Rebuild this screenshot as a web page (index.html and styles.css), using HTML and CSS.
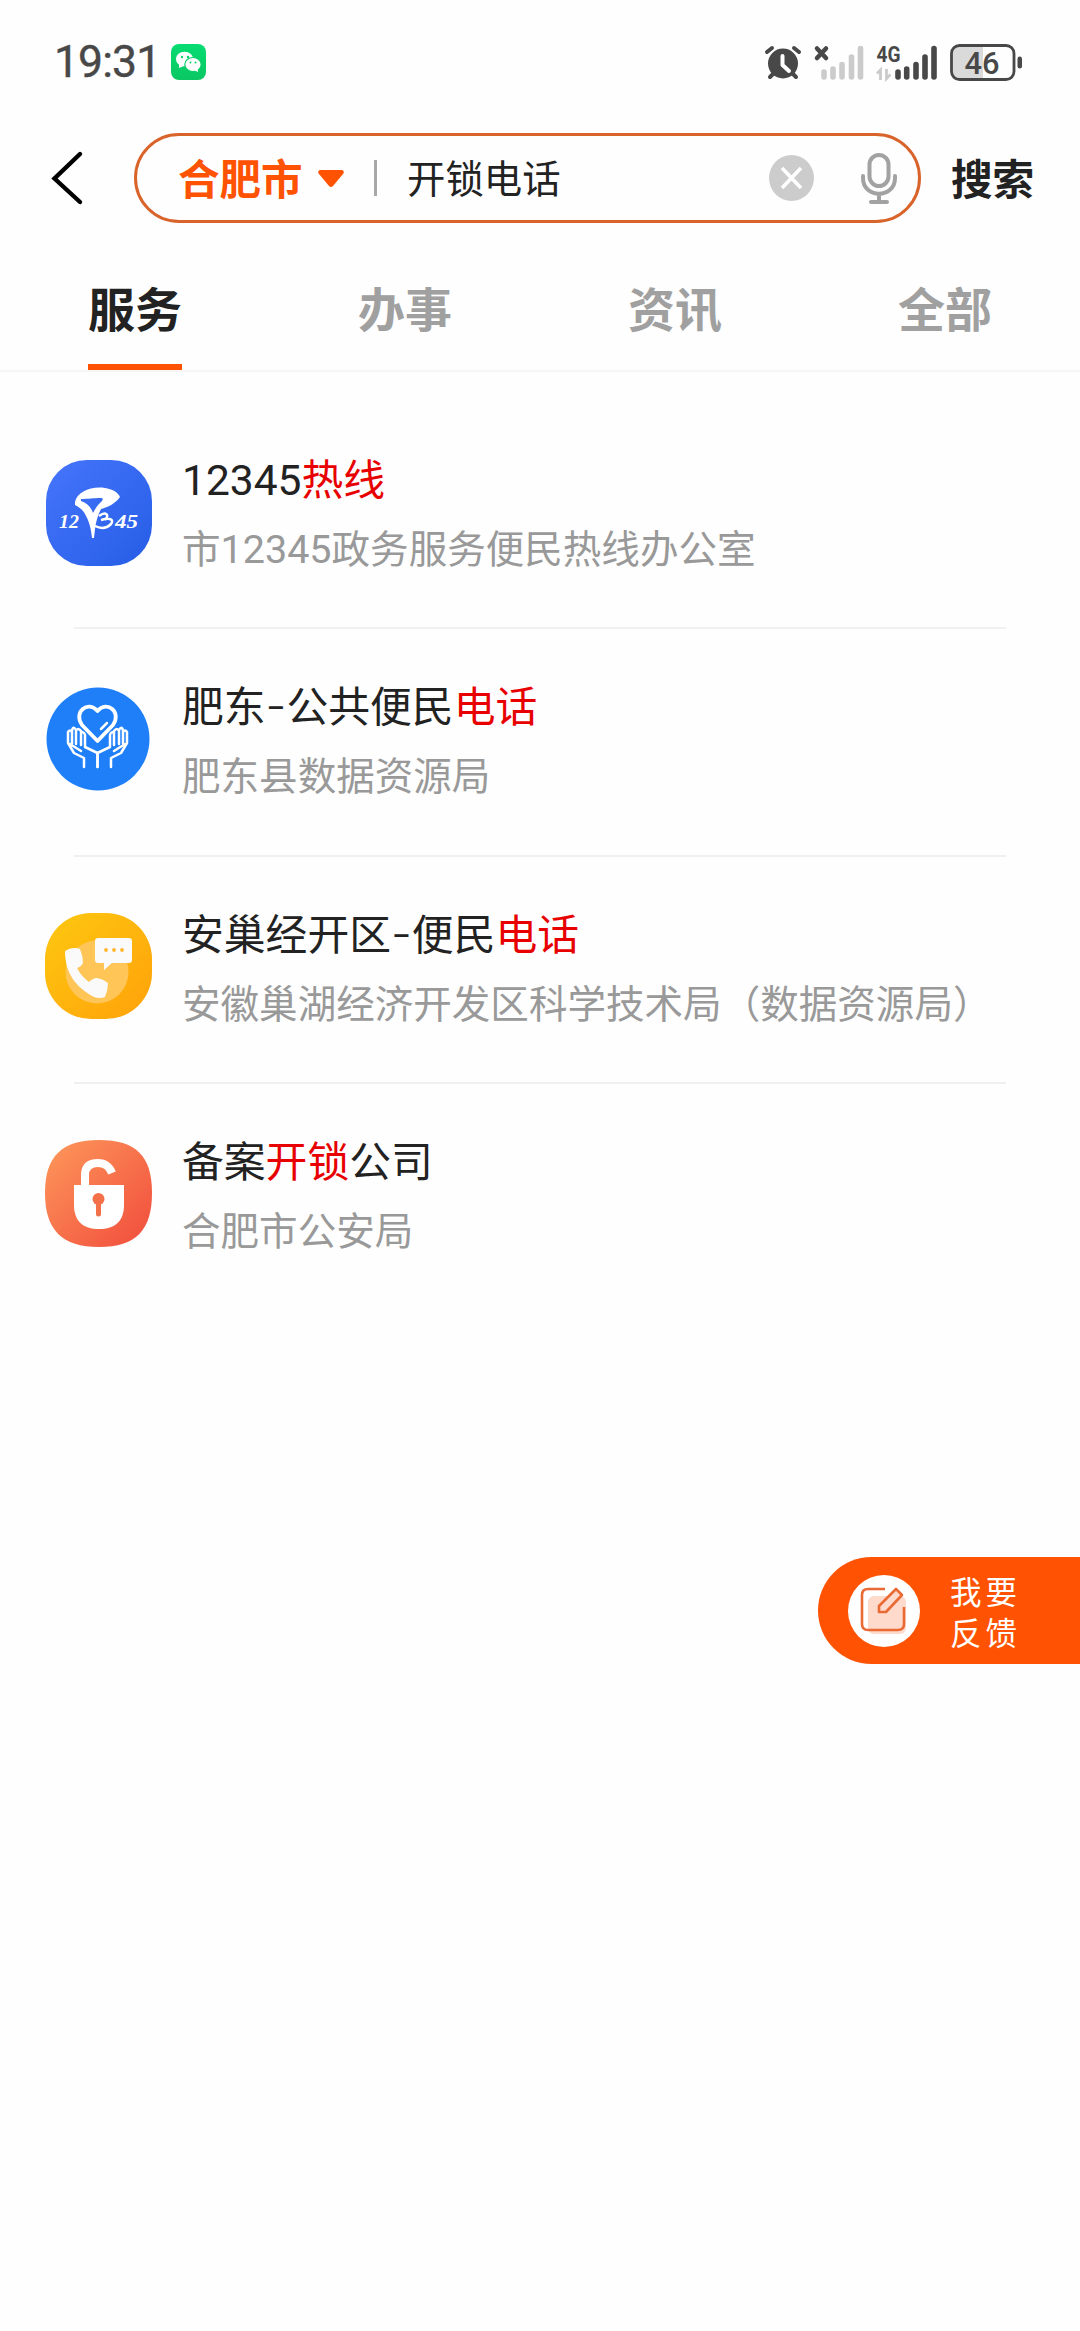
FILE: index.html
```
<!DOCTYPE html>
<html lang="zh-CN">
<head>
<meta charset="utf-8">
<title>搜索</title>
<link rel="stylesheet" href="styles.css">
</head>
<body>
<header class="status">
  <span class="time">19:31</span>
  <svg class="wechat" width="35" height="36" viewBox="0 0 35 36"><defs><linearGradient id="wg" x1="0" y1="0" x2="0" y2="1"><stop offset="0" stop-color="#06dc72"/><stop offset="1" stop-color="#0ac762"/></linearGradient></defs><rect width="35" height="36" rx="8" fill="url(#wg)"/><ellipse cx="13.5" cy="15" rx="8.6" ry="7.3" fill="#fff"/><path d="M8 20v4l5-2z" fill="#fff"/><ellipse cx="22" cy="20.5" rx="8.2" ry="7" fill="#fff" stroke="#08d06a" stroke-width="1.2"/><path d="M23 26l4 2-.3-4z" fill="#fff"/><g fill="#0ad06a"><circle cx="11" cy="13" r="1.2"/><circle cx="17" cy="13" r="1.2"/><circle cx="19.5" cy="18.5" r="1"/><circle cx="24.500" cy="18.500" r="1"/></g></svg>
  <svg class="signals" width="262" height="40" viewBox="762 42 262 40" fill="#484848">
    <circle cx="783" cy="63.500" r="15"/><g stroke="#484848" stroke-width="4" stroke-linecap="round"><path d="M767 52l5-4M799 52l-5-4M774 73l-4 4M792 73l4 4"/></g><path d="M782.500 56v9l6.500 6" fill="none" stroke="#fff" stroke-width="4" stroke-linecap="round" stroke-linejoin="round"/>
    <path d="M817 48.500l9 9.500M826 48.500L817 58" stroke="#484848" stroke-width="4.500" stroke-linecap="round"/>
    <g stroke="#cbcbcb" stroke-width="5.600" stroke-linecap="round"><path d="M824 72v5M833 69v8M842 64.500v12.500M851.500 57v20M860.500 48.500V77"/></g>
    <text x="876.500" y="62" class="net" textLength="24" lengthAdjust="spacingAndGlyphs">4G</text>
    <path d="M877 73.500l3.500-3.500v10M886.500 69v9.500l4-4" fill="none" stroke="#cbcbcb" stroke-width="2.800"/>
    <g stroke="#484848" stroke-width="5.600" stroke-linecap="round"><path d="M898 72v5M906.700 69v8M916 64.500v12.500M925 57v20M934 48.500V77"/></g>
    <path d="M959 45h24v34h-24q-7 0-7-7V52q0-7 7-7z" fill="#dadada"/><rect x="951.500" y="45.500" width="62.500" height="34" rx="8" fill="none" stroke="#484848" stroke-width="2.800"/>
    <rect x="1017.500" y="56.500" width="4.500" height="12" rx="2.200"/>
    <text x="964.500" y="74" class="bat" textLength="35" lengthAdjust="spacingAndGlyphs">46</text>
  </svg>
</header>
<div class="search">
  <svg class="back" width="40" height="60" viewBox="0 0 40 60"><path d="M34 6L8.500 30.500 34 54" fill="none" stroke="#000" stroke-width="4.400" stroke-linecap="round"/></svg>
  <div class="pill">
    <b class="city">合肥市</b>
    <svg class="caret" width="26" height="18" viewBox="0 0 26 18"><path d="M2 0h22q3 1 1 4L15 16q-2 2-4 0L1 4Q-1 1 2 0z" fill="#ff5303"/></svg>
    <i class="bar"></i>
    <span class="query">开锁电话</span>
    <svg width="45" height="46" viewBox="0 0 45 46"><ellipse cx="22.500" cy="23" rx="22.500" ry="23" fill="#ccc"/><path d="M13 13l19 20M32 13L13 33" stroke="#fff" stroke-width="3.600"/></svg>
    <svg class="mic" width="38" height="52" viewBox="0 0 38 52" fill="none" stroke="#a2a2a2" stroke-width="4"><rect x="9.500" y="3" width="19" height="31" rx="9.500"/><path d="M3 24v2c0 21 32 21 32 0v-2M19 42v8M11 50h16" stroke-linecap="round"/></svg>
  </div>
  <b class="go">搜索</b>
</div>
<nav class="tabs"><span class="tab on">服务</span><span class="tab">办事</span><span class="tab">资讯</span><span class="tab">全部</span></nav>
<main class="list">
  <section class="item">
    <svg class="icon" width="108" height="108" viewBox="0 0 108 108"><defs><linearGradient id="a" x1="0" y1="0" x2="1" y2="1"><stop offset="0" stop-color="#4575fb"/><stop offset="1" stop-color="#265de6"/></linearGradient></defs><rect x="1" y="1" width="106" height="106" rx="41" fill="url(#a)"/><path d="M30 43C32 33 46 27 60 29c7 1 13 4 15 9-5 7-12 10-19 12-3 6-5 12-6 20l-1 9h-2c-1-10-3-17-7-24-2-4-6-7-10-9zM36 40c6 0 14-1 19-1 4 0 3 2 1 4-4 4-6 7-8 11-2-6-6-10-12-12z" fill="#fff" fill-rule="evenodd"/><path d="M54 57c7-5 11-1 6 4M56 61c10-3 13 0 10 4-4 4-10 5-16 2" fill="none" stroke="#fff" stroke-width="2.500"/><text x="14" y="69" class="logo" textLength="20" lengthAdjust="spacingAndGlyphs">12</text><text x="70" y="69" class="logo" textLength="23" lengthAdjust="spacingAndGlyphs">45</text></svg>
    <div class="copy"><h2><span class="num">12345</span><em>热线</em></h2><p>市<span class="num">12345</span>政务服务便民热线办公室</p></div>
  </section>
  <section class="item">
    <svg class="icon" width="108" height="108" viewBox="0 0 108 108"><circle cx="53" cy="53" r="51.500" fill="#1e7ff8"/><g fill="none" stroke="#fff" stroke-width="2.500" stroke-linejoin="round" stroke-linecap="round"><path d="M52.500 55L37 39c-9-13 6-25 15.500-14C62 14 77 26 68 39z" stroke-width="3.800"/><path d="M56 43l6-6"/><g id="hand"><path d="M39 81v-9l-10-5-6-10V46q2-3 4 0v12M27 45q1-6 4-1v14M31 45q2-4 5 0v14M36 47q3-2 4 2v12l12.500 6M25 58l11 7M52.500 67v14"/></g><use href="#hand" transform="matrix(-1 0 0 1 105 0)"/></g></svg>
    <div class="copy"><h2>肥东<span class="dash">-</span>公共便民<em>电话</em></h2><p>肥东县数据资源局</p></div>
  </section>
  <section class="item">
    <svg class="icon" width="108" height="108" viewBox="0 0 108 108"><defs><linearGradient id="y" x1="0" y1="0" x2="1" y2="1"><stop offset="0" stop-color="#fdc810"/><stop offset="1" stop-color="#ffa10a"/></linearGradient></defs><rect x="0" y="0" width="107" height="106" rx="46" fill="url(#y)"/><circle cx="52" cy="59" r="31.500" fill="#ffc557"/><path d="M20 38q7-5 15-2 3 7 3 14-2 4-6 5 4 8 12 14 4-4 8-4 6 1 11 5 0 7-3 14-5 2-11 0C30 74 20 59 20 38z" fill="#fafafa"/><path d="M53 25h31q3 0 3 3v19q0 3-3 3H67l-8 7v-7h-6q-3 0-3-3V28q0-3 3-3z" fill="#fafafa"/><g fill="#ffb52d"><circle cx="61" cy="37" r="1.900"/><circle cx="69" cy="37" r="1.900"/><circle cx="77" cy="37" r="1.900"/></g></svg>
    <div class="copy"><h2>安巢经开区<span class="dash">-</span>便民<em>电话</em></h2><p>安徽巢湖经济开发区科学技术局（数据资源局）</p></div>
  </section>
  <section class="item">
    <svg class="icon" width="108" height="108" viewBox="0 0 108 108"><defs><linearGradient id="r" x1="0" y1="0" x2="1" y2="1"><stop offset=".1" stop-color="#fc9158"/><stop offset=".9" stop-color="#f2533f"/></linearGradient></defs><path d="M54 0C91 0 107 16 107 53S91 107 54 107 0 90 0 53 17 0 54 0z" fill="url(#r)"/><path d="M29 45h50v20c0 16-9 24-25 24S29 81 29 65z" fill="#fff"/><path d="M40 48V35q0-12 13-12 10 0 14 10" fill="none" stroke="#fff" stroke-width="8"/><circle cx="53.500" cy="59" r="6" fill="#f47049"/><path d="M53.500 61v13" stroke="#f47049" stroke-width="5" stroke-linecap="round"/></svg>
    <div class="copy"><h2>备案<em>开锁</em>公司</h2><p>合肥市公安局</p></div>
  </section>
</main>
<aside class="feedback">
  <svg width="72" height="72" viewBox="0 0 72 72"><circle cx="36" cy="36" r="36" fill="#fff"/><rect x="20" y="21" width="38" height="38" rx="6" fill="#fddacb"/><path d="M37 14H20q-6 0-6 6v29q0 6 6 6h30q6 0 6-6V32" fill="none" stroke="#ea6a35" stroke-width="2.600"/><path d="M31 31l17-17 6 6-16 17h-7z" fill="#fddacb" stroke="#ea6a35" stroke-width="2.600" stroke-linejoin="round"/></svg>
  <span>我要<br>反馈</span>
</aside>
</body>
</html>
```
FILE: styles.css
```
body { margin: 0; height: 2331px; position: relative; background: #fefefe; color: #222; font-family: "Noto Sans CJK SC", sans-serif; overflow: hidden; }
svg { display: block; flex: none; }
.status { height: 124px; display: flex; align-items: center; padding: 0 56px 0 54px; box-sizing: border-box; color: #484848; }
.time { width: 117px; padding-top: 1px; font: 400 44.5px/1 Roboto, sans-serif; letter-spacing: -0.9px; -webkit-text-stroke: 0.4px #484848; }
.signals { margin-left: auto; }
.net { font: 700 22px Roboto, sans-serif; }
.bat { font: 500 32px Roboto, sans-serif; }
.search { height: 108px; display: flex; align-items: center; padding: 0 0 0 46px; }
.pill { width: 787px; height: 90px; margin-left: 48px; box-sizing: border-box; border: 3px solid #d9642b; border-radius: 45px; display: flex; align-items: center; padding: 0 20px 0 41px; }
.city, .query, .go { padding-bottom: 3px; white-space: nowrap; }
.query { padding-bottom: 4px; }
.city { width: 124px; font-size: 41.5px; line-height: 60px; color: #ff5303; }
.caret { margin: 1px 0 0 16px; }
.bar { width: 3px; height: 36px; margin-left: 30px; background: #a8a8a8; }
.query { flex: 1; margin-left: 30px; font-size: 38.4px; line-height: 60px; }
.mic { margin-left: 46px; }
.go { margin-left: 30px; font-size: 41.6px; line-height: 60px; }
.tabs { height: 140px; box-sizing: border-box; border-bottom: 2px solid #f6f6f6; display: grid; grid-template-columns: repeat(4, 270px); justify-items: center; }
.tab { height: 138px; box-sizing: border-box; line-height: 149px; font-size: 47px; font-weight: 700; color: #a0a0a0; }
.on { color: #222; border-bottom: 6px solid #ff5303; }
.list { padding-top: 29px; }
.item { height: 227.5px; box-sizing: border-box; display: flex; padding: 57px 0 0 45px; background: linear-gradient(#f0f0f0, #f0f0f0) 74px 100% / 932px 2px no-repeat; }
.item:first-child { height: 228px; padding-top: 58px; }
.item:last-child { background: none; }
.item:nth-child(n+3) .icon { margin-top: -1px; }
.copy { margin: -3px 0 0 29px; white-space: nowrap; }
h2, p { margin: 0; font-weight: 400; }
h2 { font-size: 41.8px; line-height: 42px; }
p { margin-top: 27px; font-size: 38.55px; line-height: 42px; color: #999; }
em { color: #e80000; font-style: normal; }
.num { font-family: Roboto, sans-serif; font-size: 42.5px; line-height: 0; }
p .num { font-size: 39.5px; }
.dash { font-family: Inter, sans-serif; font-size: 46px; font-weight: 300; line-height: 0; }
.logo { font: italic 700 19px "Liberation Serif", serif; fill: #fff; }
.feedback { position: absolute; right: 0; top: 1557px; width: 262px; height: 107px; box-sizing: border-box; padding-left: 30px; border-radius: 54px 0 0 54px; background: #ff5303; color: #fff; display: flex; align-items: center; gap: 30px; font-size: 31.5px; line-height: 41px; letter-spacing: 4px; }
```
